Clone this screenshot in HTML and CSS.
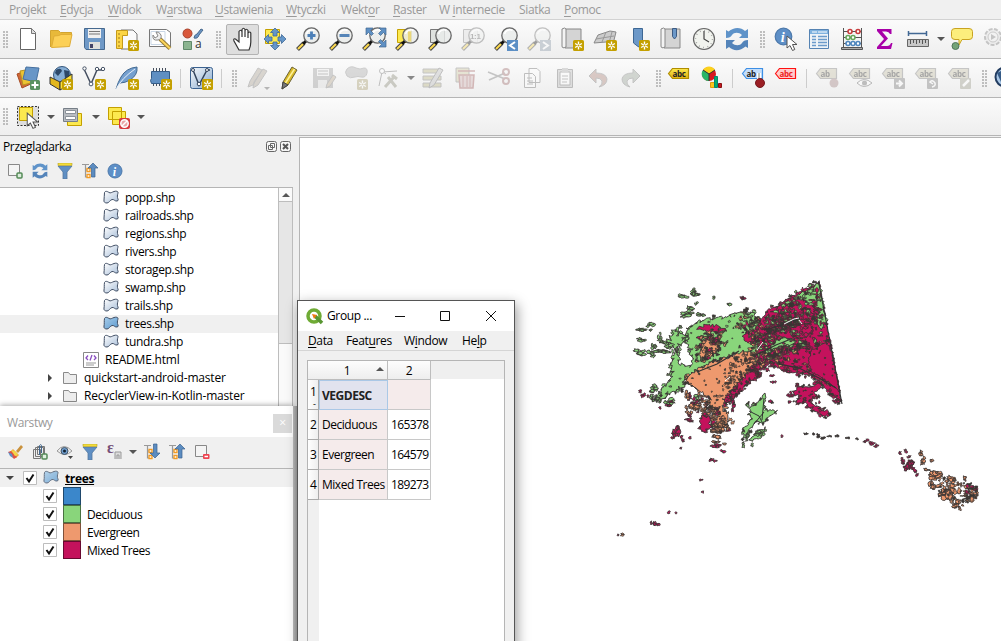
FILE: index.html
```
<!DOCTYPE html>
<html lang="pl">
<head>
<meta charset="utf-8">
<title>QGIS</title>
<link rel="stylesheet" href="styles.css">
</head>
<body>
<svg class="sprite" aria-hidden="true">
<defs>
<linearGradient id="gPoly" x1="0" y1="0" x2="1" y2="1"><stop offset="0" stop-color="#fff"/><stop offset="1" stop-color="#a9bfd9"/></linearGradient>
<linearGradient id="gBlue" x1="0" y1="0" x2="1" y2="1"><stop offset="0" stop-color="#a8cdea"/><stop offset="1" stop-color="#5e9bd0"/></linearGradient>
<linearGradient id="gPale" x1="0" y1="0" x2="1" y2="1"><stop offset="0" stop-color="#f8fafc"/><stop offset="1" stop-color="#86a9cf"/></linearGradient>
<linearGradient id="gYel" x1="0" y1="0" x2="0" y2="1"><stop offset="0" stop-color="#fce94f"/><stop offset="1" stop-color="#e0b010"/></linearGradient>
</defs>
<symbol id="star" viewBox="0 0 24 24"><rect x="13" y="13" width="11" height="11" rx="1.6" fill="#c4a000"/><path d="M18.5 14.6v7.8M15.1 16.5l6.8 4M15.1 20.5l6.8-4" stroke="#fff" stroke-width="1.4"/><circle cx="18.5" cy="18.5" r="1" fill="#c4a000"/></symbol>
<symbol id="lens" viewBox="0 0 24 24"><path d="M1.5 22.5 8 16" stroke="#444" stroke-width="4"/><path d="M2 22 8 16" stroke="#fcd94f" stroke-width="2"/><path d="M7 17l3-3" stroke="#111" stroke-width="3"/><circle cx="15.5" cy="8.500" r="7.700" fill="#e9ebea" fill-opacity=".82" stroke="#666" stroke-width="1.300"/><path d="M10.500 7a5.500 5.500 0 0 1 8-3.500" stroke="#fff" fill="none" stroke-width="1.500"/></symbol>
<symbol id="cursor" viewBox="0 0 12 17"><path d="M1 1v12l3-2.500 2.500 5 2.300-1-2.300-5H11z" fill="#fff" stroke="#555"/></symbol>
<symbol id="refresh" viewBox="0 0 24 24"><path d="M1 11V3l2.500 1.500C9-.5 16 0 20 4l3-2v9h-9l3-3C14 5 9 5 7 8c-1 2-3 3-6 3z" fill="#5f93c9"/><path d="M23 13v8l-2.500-1.500C15 24.500 8 24 4 20l-3 2v-9h9l-3 3c3 3 8 3 10 0 1-2 3-3 6-3z" fill="#5484ba"/></symbol>
<symbol id="info" viewBox="0 0 16 16"><circle cx="8" cy="8" r="7" fill="#5d8fc7" stroke="#4d79ab"/><text x="5.700" y="12.500" class="info-i">i</text></symbol>
<symbol id="pencil" viewBox="0 0 24 24"><path d="M4 23l1-7L14 1l5 3L10 19z" fill="#d8b928" stroke="#6d6436"/><path d="M7.500 17 16.500 3" stroke="#fff29a" stroke-width="1.500"/><path d="M4 23l1-7 5 3z" fill="#777" stroke="#444"/></symbol>
<symbol id="poly" viewBox="0 0 16 14"><path d="M1.500 2.500c1-2 3-1 4.500 0s3-.3 5-1 4-.2 4 1-1 3-.5 5 1.500 3-.5 3.500-3-2-5-1.500-3 3.500-5 3.500-3.500-1-3-3S1 5 1.500 2.500z" stroke="#3f4d63"/></symbol>
<symbol id="funnel" viewBox="0 0 16 16"><path d="M1 3h14L10 9v7H6V9z" fill="#5f8fc4" stroke="#53779f" stroke-width=".8"/><path d="M1 0h14v2.500H1z" fill="#f3dd38" stroke="#b7a12d" stroke-width=".6"/></symbol>
<symbol id="treeic" viewBox="0 0 16 16"><path d="M0 1.500h7M3.500 1v13H7M3.500 7H7" stroke="#999" stroke-width="1.200" fill="none"/><path d="M5 5.500h3v3H5zM5 11.500h3v3H5z" fill="#fff" stroke="#f39a20" stroke-width="1.300"/></symbol>
<symbol id="tag" viewBox="0 0 24 24"><path d="M1.500 7.500l4-5h16v10h-16z" stroke-width="1.200"/></symbol>
<symbol id="fold" viewBox="0 0 16 16"><path d="M1.500 13.500v-11h5l1.500 2h6.500v9z" fill="#ededed" stroke="#8a8a8a"/></symbol>
<symbol id="scroll" viewBox="0 0 24 24"><path d="M5 2h16v19H5z" fill="#d4d4d4" stroke="#888"/><path d="M2 2q3-2 4 0v18q-4 2-4-1z" fill="#f3f3f3" stroke="#888"/></symbol>
<symbol id="check" viewBox="0 0 14 14"><path d="M.5.5h13v13H.5z" fill="#fff" stroke="#bdbdbd"/><path d="M3.500 7l2.500 3.500L10.500 3.500" stroke="#111" stroke-width="2" fill="none"/></symbol>
</svg>

<nav class="menubar">
<span>Pro<u>j</u>ekt</span><span><u>E</u>dycja</span><span><u>W</u>idok</span><span>W<u>a</u>rstwa</span><span><u>U</u>stawienia</span><span><u>W</u>tyczki</span><span>Wekt<u>o</u>r</span><span><u>R</u>aster</span><span>W <u>i</u>nternecie</span><span>Siatka</span><span><u>P</u>omoc</span>
</nav>

<div class="toolbar">
<i class="grip"></i>
<svg class="ic"><path d="M4.500 1.500h11l4 4v17h-15z" fill="#fff" stroke="#666"/><path d="M15.500 1.500v5h4" fill="#ddd" stroke="#777"/></svg>
<svg class="ic"><path d="M1.500 20V3.500h8l2 2h11V9" fill="#e8b93a" stroke="#d3a430"/><path d="M2.500 20.500 5 9q5 0 7-1.500h11l-2.500 12z" fill="#fcd057" stroke="#e0ad36"/></svg>
<svg class="ic"><path d="M2.500 1.500h20v21H4l-1.500-2z" fill="#6f99c7" stroke="#46698f"/><path d="M6 2h13v9H6z" fill="#f0f0f0"/><path d="M7 4.500h11M7 7h11" stroke="#777"/><path d="M7 15h11v7H7z" fill="#e0e0dc"/><path d="M8 17h3v4H8z" fill="#446"/></svg>
<svg class="ic"><path d="M6 3h12l4 4v15H6z" fill="#fafafa" stroke="#777"/><path d="M1.500 3.500h11v5h-5v13h-6z" fill="#fcd545" stroke="#c59a1a"/><path d="M3 7h2M3 11h2M3 15h2M3 19h2" stroke="#9d7b22"/><use href="#star"/></svg>
<svg class="ic"><path d="M1.500 2.500h17l4 3v14h-21z" fill="#fff" stroke="#777"/><path d="M3 4.500h14v13H3z" fill="none" stroke="#c9d7e6"/><path d="M12 12l10 9.500" stroke="#957b37" stroke-width="4"/><path d="M12 12l10 9.500" stroke="#fcd65a" stroke-width="2"/><path d="M8 5l2 4-3 2-2-3q-1 6 5 5 4-1 3-5-2-4-5-3z" fill="#eee" stroke="#888"/></svg>
<svg class="ic"><circle cx="6.500" cy="6.500" r="4.500" fill="#d9583b" stroke="#a8432d"/><path d="M13 11q0-3 3-4l4-5 2 1-4 5q-1 4-5 3z" fill="#6b95c4" stroke="#47688d"/><path d="M2.500 14.500h8v8h-8z" fill="#8bb490" stroke="#60896a"/><text x="14" y="21" class="let">a</text></svg>
<i class="grip wide"></i>
<span class="pressed"><svg class="ic"><path d="M7 23 2 14q-1-3 1.500-2L7 15V4.500q1.500-2.500 3 0V10 2.500q1.500-2.500 3 0V10 3.500q1.500-2.500 3 0V11 6q1.800-2 2.800 0v9q0 4-1.800 8z" fill="#fff" stroke="#333" stroke-width="1.200"/></svg></span>
<svg class="ic"><path d="M2.500 2.500h14v14h-14z" fill="#fce94f" stroke="#c4a000"/><path d="M12 1l4.500 4.500H14V9h-4V5.500H7.500zM12 23l4.500-4.500H14V15h-4v3.500H7.500zM1 12l4.500-4.500V10H9v4H5.500v2.500zM23 12l-4.500-4.500V10H15v4h3.500v2.500z" fill="#6596c8" stroke="#3f6998" stroke-width=".8"/></svg>
<svg class="ic"><use href="#lens"/><path d="M15.500 4.500v8M11.500 8.500h8" stroke="#4d80b8" stroke-width="2.800"/></svg>
<svg class="ic"><use href="#lens"/><path d="M10.500 8.500h10" stroke="#5585b8" stroke-width="3"/></svg>
<svg class="ic"><use href="#lens"/><path d="M4 1h7L8.500 3.500l3 3-2 2-3-3L4 8zM24 1v7l-2.500-2.500-3 3-2-2 3-3L17 1zM24 20h-7l2.500-2.500-3-3 2-2 3 3L24 13z" fill="#5f90c4" stroke="#42688f" stroke-width=".7"/></svg>
<svg class="ic"><path d="M2.500 2.500h14v13h-14z" fill="#fce94f" stroke="#c4a000"/><use href="#lens"/><path d="M13 4.500h3v10h-3z" fill="#ead778"/></svg>
<svg class="ic"><path d="M2.500 2.500h14v13h-14z" fill="#dfe2df" stroke="#777"/><use href="#lens"/></svg>
<svg class="ic off"><path d="M2.500 2.500h14v13h-14z" fill="#ddd" stroke="#777"/><use href="#lens"/><text x="9" y="12" class="one">1:1</text></svg>
<svg class="ic"><use href="#lens"/><path d="M13 13h11v11H13z" fill="#5c8fc5"/><path d="M21 15l-5 3.500 5 3.500" stroke="#fff" stroke-width="2" fill="none"/></svg>
<svg class="ic off"><use href="#lens"/><path d="M13 13h11v11H13z" fill="#8897a6"/><path d="M16 15l5 3.500-5 3.500" stroke="#fff" stroke-width="2" fill="none"/></svg>
<svg class="ic"><use href="#scroll"/><use href="#star"/></svg>
<svg class="ic"><path d="M1 16 5 8 17 4l6 1-3 12-7-2z" fill="#ccc" stroke="#888"/><path d="M3 12l18-3M9 15l4-10M16 16l3-11" stroke="#999" fill="none"/><use href="#star"/></svg>
<svg class="ic"><path d="M7.500 1.500h9v20l-4.500-2-4.500-3.500z" fill="#6c98c8" stroke="#3d6794"/><use href="#star"/></svg>
<svg class="ic"><use href="#scroll"/><path d="M13.500 1.500h4v8l-2 2.500-2-2.500z" fill="#6c98c8" stroke="#3d5b82"/></svg>
<svg class="ic"><circle cx="12" cy="12" r="10.500" fill="#f1f3ee" stroke="#666" stroke-width="1.200"/><circle cx="12" cy="12" r="8.500" fill="none" stroke="#999" stroke-width="1.500" stroke-dasharray=".8 3.650"/><path d="M12 4v8l5 3" stroke="#444" stroke-width="1.200" fill="none"/></svg>
<svg class="ic"><use href="#refresh"/></svg>
<i class="grip wide"></i>
<svg class="ic"><svg width="19" height="19" viewBox="0 0 16 16"><use href="#info"/></svg><svg x="12" y="8" width="12" height="17"><use href="#cursor"/></svg></svg>
<svg class="ic"><path d="M2.500 2.500h19v19h-19z" fill="#eef3f7" stroke="#5583b3"/><path d="M3 3h18v4H3z" fill="#7fb2df"/><path d="M5 5h5m1 0h9" stroke="#fff"/><path d="M5 9.500h4m2 0h9M5 12.500h4m2 0h9M5 15.500h4m2 0h9M5 18.500h4m2 0h9" stroke="#6b9bcb" stroke-width="1.300"/></svg>
<svg class="ic"><path d="M3.500 1v20M21.500 1v20M3 4.500h19M3 10.500h19M3 16.500h19" stroke="#555"/><path d="M1.500 20.500h21v2h-21z" fill="#aaa" stroke="#555"/><g fill="#fff" stroke-width="1.600"><g stroke="#c73d3d"><circle cx="10" cy="4.500" r="2"/><circle cx="18" cy="4.500" r="2"/></g><g stroke="#67a75b"><circle cx="8" cy="10.500" r="2"/><circle cx="13" cy="10.500" r="2"/></g><g stroke="#4f86bd"><circle cx="8" cy="16.500" r="2"/><circle cx="13" cy="16.500" r="2"/><circle cx="18" cy="16.500" r="2"/></g></g></svg>
<svg class="ic"><path d="M4 2h14.500v5H17q-1-2.500-4-2.500H9l6 7-7 7.500h6q3 0 4-3h1.500L18 22H4v-2l7-8L4 4z" fill="#a800a8"/></svg>
<svg class="ic"><path d="M2 6.500h19M2.500 4v5M20.500 4v5" stroke="#426894" stroke-width="1.500"/><path d="M1.500 12.500h21v7h-21z" fill="#c7c7c7" stroke="#666"/><path d="M4.500 13v4m3-4v3m3-3v4m3-4v3m3-3v4m3-4v3" stroke="#555"/></svg>
<i class="arrow snug"></i>
<svg class="ic"><path d="M5 1.500h14q3.500 0 3.500 3v5q0 3-3.500 3h-7L9 18v-5.500H5q-3.500 0-3.500-3v-5q0-3 3.500-3z" fill="#fcee7c" stroke="#c9a321"/><circle cx="5.500" cy="19" r="3.500" fill="#73a377" stroke="#51765a"/></svg>
<svg class="ic off"><circle cx="10" cy="10" r="8" fill="#ddd" stroke="#777" stroke-width="2" stroke-dasharray="4 1.500"/><circle cx="10" cy="10" r="5" fill="#eee" stroke="#888"/><path d="M8 7v6l5-3z" fill="#777"/></svg>
</div>

<div class="toolbar">
<i class="grip"></i>
<svg class="ic"><path d="M1 8l11-4 5 13-11 5z" fill="#cf6837" stroke="#a84c25"/><path d="M4 5l11-2 3 13-11 3z" fill="#edc332" stroke="#b89422"/><path d="M10 1l13 1-3 14-13-3z" fill="#6896c7" stroke="#46709f"/><rect x="14" y="14" width="10" height="10" rx="1.500" fill="#5a9160"/><path d="M19 15.500v7M15.500 19h7" stroke="#fff" stroke-width="2"/></svg>
<svg class="ic"><circle cx="13" cy="9" r="8.500" fill="#85add4" stroke="#35577d"/><path d="M7 4q5-3 6 1l-4 5-3-3zM15 4l5 1 1 6-5 1z" fill="#2d4868"/><path d="M1 11l10 5v8L1 18z" fill="#e3b71c" stroke="#333"/><path d="M11 16l12-8v9l-12 7z" fill="#fcdf37" stroke="#333"/><use href="#star"/></svg>
<svg class="ic"><path d="M2 3l7 15 6-14h6" stroke="#444e60" stroke-width="1.500" fill="none"/><g fill="#fff" stroke="#465366"><circle cx="2.500" cy="2.500" r="1.700"/><circle cx="9" cy="18" r="1.900"/><circle cx="15" cy="3" r="1.700"/><circle cx="21" cy="3" r="1.700"/></g><use href="#star"/></svg>
<svg class="ic"><path d="M1 23q2-7 5-12Q11 2 22 1q1 8-7 13-5 3-10 3" fill="#75a0cf" stroke="#426991"/><path d="M1 23Q7 12 20 3" stroke="#e7f0fa" fill="none"/><use href="#star"/></svg>
<svg class="ic"><path d="M5.500 2v18m3-18v18m3-18v18m3-18v18m3-18v18" stroke="#454f5d"/><path d="M3.500 5.500h18v12h-18l-1-3 1-2z" fill="#5f8fc2" stroke="#355c88"/><use href="#star"/></svg>
<i class="sep"></i>
<svg class="ic"><rect x="1.500" y="1.500" width="22" height="21" rx="2" fill="url(#gPale)" stroke="#3b6290"/><path d="M4 4l6 15L18 4h3" stroke="#33445c" stroke-width="1.500" fill="none"/><g fill="#fff" stroke="#33445c"><circle cx="4" cy="4" r="1.500"/><circle cx="10" cy="18" r="1.800"/><circle cx="18" cy="4" r="1.500"/></g><use href="#star"/></svg>
<i class="sep"></i><i class="grip wide"></i>
<div class="tight">
<svg class="ic off"><path d="M2 21l2-6L12 2l4 2L7 19zM7 22l1-6 9-13 4 2-9 14z" fill="#aaa091" stroke="#777"/><path d="M18 21h6l-3 3z" fill="#555"/></svg>
<svg class="ic"><use href="#pencil" x="-1"/></svg>
<svg class="ic off"><path d="M2 2h20v20H2z" fill="#999"/><path d="M6 3h12v7H6z" fill="#eee"/><path d="M7 5h10M7 8h10" stroke="#777"/><path d="M7 14h9v8H7z" fill="#ddd"/><path d="M15 22l1-4 6-9 3 2-6 9z" fill="#b9a88f" stroke="#777"/></svg>
<svg class="ic off"><path d="M3 3q4-4 9-1 4 2 8 0 4 0 3 5-1 5-6 4-3-1-6 0-5 2-8-1-3-4 0-7z" fill="#aaa" stroke="#888"/><use href="#star" class="gray"/></svg>
<svg class="ic off"><path d="M3 20 6 6l15-1M6 5l4 3" fill="none" stroke="#666"/><circle cx="6" cy="5" r="2.500" fill="#fff" stroke="#666"/><path d="M9 21l9-10M12 11l8 10M16 9l5 4" stroke="#887" stroke-width="3"/></svg>
</div>
<i class="arrow dim"></i>
<svg class="ic off"><path d="M2 3h18v4H2zm0 7h18v4H2zm0 7h18v4H2z" fill="#b8b37e" stroke="#777"/><path d="M8 22l1-5L18 2l4 2-9 15z" fill="#bbb" stroke="#666"/></svg>
<svg class="ic off"><path d="M2 2h13v14H2z" fill="#ccc69c" stroke="#777"/><path d="M4 5h17M5 9h15l-1 13H6z" fill="#ceb1b1" stroke="#9d5555" stroke-width="1.500"/><path d="M9 10v11m4-11v11m3-11v11" stroke="#9d5555"/></svg>
<svg class="ic off"><path d="M1 6l17 7M2 14l16-7" stroke="#777" stroke-width="1.800"/><circle cx="19" cy="6" r="3" fill="none" stroke="#9b6868" stroke-width="2"/><circle cx="19" cy="15" r="3" fill="none" stroke="#9b6868" stroke-width="2"/></svg>
<svg class="ic off"><path d="M9 2.500h8l3 3v11H9zM4.500 7.500h8l3 3v11h-11z" fill="#fff" stroke="#666"/><path d="M7 12h5m-5 3h6m-6 3h6" stroke="#666"/></svg>
<svg class="ic off"><path d="M4.500 3.500h15v18h-15z" fill="#bbb" stroke="#666"/><path d="M7 6h10v13H7z" fill="#fff" stroke="#666"/><path d="M9 2h6v4H9z" fill="#aaa"/><path d="M9 10h6m-6 3h6m-6 3h5" stroke="#777"/></svg>
<svg class="ic off"><path d="M3 10l7-7v4q10 0 11 6 0 6-8 8 4-3 3-6-1-3-6-3v5z" fill="#ab8276" stroke="#777"/></svg>
<svg class="ic off"><path d="M21 10l-7-7v4Q4 7 3 13q0 6 8 8-4-3-3-6 1-3 6-3v5z" fill="#97a295" stroke="#777"/></svg>
<i class="grip mid"></i>
<svg class="ic"><use href="#tag" fill="url(#gYel)" stroke="#b08d00"/><text x="5.500" y="10.500" class="abc">abc</text></svg>
<svg class="ic"><circle cx="9" cy="8" r="7" fill="#d71920"/><path d="M9 8 3 4a7 7 0 0 1 12 0z" fill="#fcd21c"/><path d="M9 8v7A7 7 0 0 1 3 4z" fill="#2ab567"/><path d="M3 4l6 4 6-4M9 8v7" stroke="#333" fill="none"/><path d="M10.500 16.500h4v5h-4z" fill="#fcc61c" stroke="#e19b10"/><path d="M14.500 10.500h3v11h-3z" fill="#0aad69" stroke="#087"/><path d="M18.500 17.500h3v4h-3z" fill="#c21820" stroke="#811"/></svg>
<i class="sep"></i>
<svg class="ic"><use href="#tag" fill="#c5defa" stroke="#3d8fe5"/><text x="5.500" y="10.500" class="abc">ab</text><path d="M18 7v9" stroke="#fff" stroke-width="4"/><path d="M18 7v9" stroke="#887" stroke-width="1"/><circle cx="19" cy="17" r="4.500" fill="#9b1f25" stroke="#761a20"/></svg>
<svg class="ic"><use href="#tag" fill="#fcc" stroke="#f11"/><text x="5.500" y="10.500" class="abc crimson">abc</text></svg>
<i class="sep"></i>
<svg class="ic off"><use href="#tag" fill="#c4bfa5" stroke="#777"/><text x="5.500" y="10.500" class="abc">ab</text><circle cx="19" cy="17" r="4.500" fill="#a08080"/></svg>
<svg class="ic off"><use href="#tag" fill="#c4bfa5" stroke="#777"/><text x="5.500" y="10.500" class="abc">abc</text><path d="M9 17q7-7 15 0-8 7-15 0z" fill="#fff" stroke="#555"/><circle cx="16.500" cy="17" r="2.500" fill="#666"/></svg>
<svg class="ic off"><use href="#tag" fill="#c4bfa5" stroke="#777"/><text x="5.500" y="10.500" class="abc">abc</text><rect x="13" y="12" width="11" height="11" rx="1" fill="#777"/><path d="M15 17.500h6m-3-3 3 3-3 3" stroke="#fff" stroke-width="2" fill="none"/></svg>
<svg class="ic off"><use href="#tag" fill="#c4bfa5" stroke="#777"/><text x="5.500" y="10.500" class="abc">abc</text><rect x="13" y="12" width="11" height="11" rx="1" fill="#777"/><path d="M18 21q4-1 3-4-3-4-5-1l3 2" stroke="#fff" stroke-width="1.500" fill="none"/></svg>
<svg class="ic off"><use href="#tag" fill="#c4bfa5" stroke="#777"/><text x="5.500" y="10.500" class="abc">abc</text><rect x="13" y="12" width="11" height="11" rx="1" fill="#998"/><path d="M16 20l6-6" stroke="#fff" stroke-width="2.500"/></svg>
<i class="grip wide"></i>
<svg class="ic"><circle cx="9" cy="11" r="9.500" fill="#a8c6e5" stroke="#223c60" stroke-width="2"/><path d="M1 7l6-3 2 6-4 6z" fill="#355a86"/></svg>
</div>

<div class="toolbar last">
<i class="grip"></i>
<svg class="ic"><path d="M1.500 1.500h21v19h-21z" fill="#dedede" stroke="#333" stroke-dasharray="2 1.500"/><path d="M3.500 2.500h13v13h-13z" fill="#fce94f" stroke="#c4a000"/><svg x="9" y="7" width="15" height="18" viewBox="0 0 12 17"><use href="#cursor"/></svg></svg><i class="arrow"></i>
<svg class="ic"><path d="M6.500 8.500h14v12h-14z" fill="#fce94f" stroke="#c4a000"/><path d="M2.500 3.500h14v13h-14z" fill="#b9bdc2" stroke="#777f88"/><path d="M4.500 5.500h10v3h-10zM4.500 11.500h10v3h-10z" fill="#fff" stroke="#8b929a"/></svg><i class="arrow"></i>
<svg class="ic"><path d="M2.500 2.500h13v12h-13zM6.500 6.500h13v13h-13z" fill="#fce94f" stroke="#c4a000"/><rect x="13" y="13" width="11" height="11" rx="2" fill="#d63b40"/><circle cx="18.500" cy="18.500" r="3.700" fill="#e9a6a6" stroke="#fff" stroke-width="1.500"/><path d="M16 21l5-5" stroke="#fff" stroke-width="1.500"/></svg><i class="arrow"></i>
</div>

<main class="work">
<aside class="browser">
<header class="dock-title"><span>Przeglądarka</span>
<svg width="26" height="12"><g fill="#f5f5f5" stroke="#666"><rect x=".5" y=".5" width="10" height="10" rx="2"/><rect x="14.500" y=".5" width="10" height="10" rx="2"/><path d="M4.500 2.500h4v4h-4zM2.500 4.500h4v4h-4z"/></g><path d="M17 3l5 5m0-5-5 5" stroke="#555" stroke-width="2"/></svg></header>
<div class="minibar">
<svg viewBox="0 0 16 16"><path d="M1.500 1.500h11v11h-11z" fill="#f4f4f4" stroke="#888"/><rect x="10" y="10" width="5" height="5" rx="1" fill="#dcecdc" stroke="#548a57" stroke-width="1.500"/></svg>
<svg viewBox="0 0 24 24"><use href="#refresh"/></svg>
<svg viewBox="0 0 16 16"><use href="#funnel"/></svg>
<svg viewBox="0 0 16 16"><use href="#treeic"/><path d="M11 0l5 5h-3v9H9.500V5H6z" fill="#5c8cc0" stroke="#3a628f" stroke-width=".7"/></svg>
<svg viewBox="0 0 16 16"><use href="#info"/></svg>
</div>
<div class="tree">
<ul class="files">
<li><svg class="pi"><use href="#poly" fill="url(#gPoly)"/></svg>popp.shp</li>
<li><svg class="pi"><use href="#poly" fill="url(#gPoly)"/></svg>railroads.shp</li>
<li><svg class="pi"><use href="#poly" fill="url(#gPoly)"/></svg>regions.shp</li>
<li><svg class="pi"><use href="#poly" fill="url(#gPoly)"/></svg>rivers.shp</li>
<li><svg class="pi"><use href="#poly" fill="url(#gPoly)"/></svg>storagep.shp</li>
<li><svg class="pi"><use href="#poly" fill="url(#gPoly)"/></svg>swamp.shp</li>
<li><svg class="pi"><use href="#poly" fill="url(#gPoly)"/></svg>trails.shp</li>
<li class="hot"><svg class="pi"><use href="#poly" fill="url(#gBlue)"/></svg>trees.shp</li>
<li><svg class="pi"><use href="#poly" fill="url(#gPoly)"/></svg>tundra.shp</li>
<li class="l2"><svg class="doc"><path d="M.5.5h15v15H.5z" fill="#fff" stroke="#888"/><path d="M5 3.500 3 6l2 2m6-4.500L13 6l-2 2M9 3 7 8.500" stroke="#8a4fc0" stroke-width="1.300" fill="none"/><path d="M3 11h10M3 13h8" stroke="#999"/></svg>README.html</li>
<li class="l1"><i class="tri"></i><svg class="fo" viewBox="0 0 16 16"><use href="#fold"/></svg>quickstart-android-master</li>
<li class="l1"><i class="tri"></i><svg class="fo" viewBox="0 0 16 16"><use href="#fold"/></svg>RecyclerView-in-Kotlin-master</li>
</ul>
<div class="scroll"><div class="up"><i></i></div><div class="thumb"></div></div>
</div>
</aside>
<section class="canvas"><svg id="map" width="701" height="504" viewBox="300 138 701 504"></svg></section>
</main>

<section class="layers">
<header><span>Warstwy</span><b>×</b></header>
<div class="minibar">
<svg viewBox="0 0 16 16"><path d="M9 7l5-6 2 2-5 6z" fill="#c9913c"/><path d="M6 5l6 6-3 3-6-6z" fill="#eea53b"/><path d="M1 8l3-1 6 6-3 2z" fill="#df5146"/><path d="M1 8l2 4 3 2-1-4z" fill="#5d90c8"/><path d="M4 6l4 1 3 4-3 1z" fill="#f3d448"/></svg>
<svg viewBox="0 0 16 16"><path d="M1.500 5.500h7v9h-7zM3.500 3.500h8v9h-8zM5.500 2.500h7v8h-7z" fill="#eee" stroke="#777"/><path d="M7.500 11V1.500q1.500-2 2 0V9" stroke="#43688f" fill="none"/><rect x="10" y="10" width="5" height="5" rx="1" fill="#e0efe0" stroke="#548a57" stroke-width="1.500"/></svg>
<svg viewBox="0 0 16 16"><path d="M0 7q7-9 15 0-7 7-15 0z" fill="#eee" stroke="#999"/><circle cx="7.500" cy="7" r="3.500" fill="#6f9dce" stroke="#456"/><circle cx="7.500" cy="7" r="1.500" fill="#123"/><path d="M11 12h5l-2.500 3z" fill="#444"/></svg>
<svg viewBox="0 0 16 16"><use href="#funnel"/></svg>
<svg viewBox="0 0 16 16"><text x="0" y="9" class="eps">ε</text><path d="M8 15V8h6v7M10 15v-4h2v4" fill="#ddd" stroke="#999"/></svg>
<i class="arrow"></i>
<svg viewBox="0 0 16 16"><use href="#treeic" x="1"/><path d="M12 14l5-5h-3V0h-3.500v9H7z" fill="#5c8cc0" stroke="#3a628f" stroke-width=".7"/></svg>
<svg viewBox="0 0 16 16"><use href="#treeic" x="1"/><path d="M12 0l5 5h-3v9h-3.500V5H7z" fill="#5c8cc0" stroke="#3a628f" stroke-width=".7"/></svg>
<svg viewBox="0 0 16 16"><path d="M2.500 1.500h11v11h-11z" fill="#f4f4f4" stroke="#888"/><rect x="10" y="10" width="6.500" height="5" rx="1" fill="#ee4350"/><path d="M11.500 12.500H15" stroke="#fff" stroke-width="1.500"/></svg>
</div>
<ul class="legend">
<li class="root"><i class="tri down"></i><svg class="cb"><use href="#check"/></svg><svg class="pi"><use href="#poly" fill="url(#gBlue)" opacity=".8"/></svg><b>trees</b></li>
<li><svg class="cb"><use href="#check"/></svg><i class="sw blue"></i></li>
<li><svg class="cb"><use href="#check"/></svg><i class="sw green"></i><span>Deciduous</span></li>
<li><svg class="cb"><use href="#check"/></svg><i class="sw orange"></i><span>Evergreen</span></li>
<li><svg class="cb"><use href="#check"/></svg><i class="sw red"></i><span>Mixed Trees</span></li>
</ul>
</section>
<i class="splitter"></i>

<section class="dialog">
<header>
<svg width="17" height="17" viewBox="0 0 17 17"><circle cx="8" cy="8" r="6" fill="#fff" stroke="#6fab35" stroke-width="3.500"/><path d="M9 8l7 7" stroke="#589632" stroke-width="3.500"/><path d="M6 6l5 1-3 4z" fill="#ee7913"/></svg>
<span>Group ...</span>
<svg width="102" height="12" class="winbtns"><path d="M0 6.500h10M45.500 1.500h9v9h-9zM91 1l10 10m0-10L91 11" fill="none" stroke="#111"/></svg>
</header>
<nav><span><u>D</u>ata</span><span>Feat<u>u</u>res</span><span>W<u>i</u>ndow</span><span>He<u>l</u>p</span></nav>
<div class="frame">
<div class="grid">
<div class="h"></div><div class="h c">1<i></i></div><div class="h c">2</div>
<div class="n first"><span>1</span><small>-</small></div><div class="k sel">VEGDESC</div><div class="k"></div>
<div class="n">2</div><div class="k">Deciduous</div><div class="v">165378</div>
<div class="n">3</div><div class="k">Evergreen</div><div class="v">164579</div>
<div class="n">4</div><div class="k">Mixed Trees</div><div class="v">189273</div>
</div>
<div class="rest"></div>
</div>
</section>
<script src="map.js"></script>
</body>
</html>
```
FILE: styles.css
```
* { box-sizing: border-box; }
body { margin: 0; width: 1001px; height: 641px; overflow: hidden; background: #f0f0f0; color: #000; font: 12px/18px "Open Sans", "Noto Sans", sans-serif; letter-spacing: -.35px; position: relative; }
.sprite { position: absolute; width: 0; height: 0; }
svg { flex: none; overflow: visible; }
ul { list-style: none; margin: 0; padding: 0; }
i { display: block; flex: none; font-style: normal; }
u { text-underline-offset: 2px; text-decoration-thickness: 1px; }

.menubar { height: 20px; border-bottom: 1px solid #d2d2d2; background: #f0f0f0; color: #999; display: grid; grid-template-columns: 51px 48px 48px 59px 71px 55px 52px 46px 80px 45px 60px; padding-left: 9px; line-height: 20px; white-space: nowrap; }
.toolbar { height: 39px; border-bottom: 1px solid #b5b5b5; background: linear-gradient(#fbfbfb, #eee); display: flex; align-items: center; overflow: hidden; }
.toolbar.last { height: 38px; }
.ic { width: 24px; height: 24px; margin: 0 5px 0 4px; }
.tight { display: flex; }
.tight .ic { margin-right: 4.5px; }
.off { opacity: .38; }
.gray { filter: grayscale(.7); }
.grip { width: 12px; height: 17px; background: radial-gradient(circle at 1px 1px, #aaa .6px, transparent 1px) 0 0 / 3px 3px content-box content-box; padding: 0 4px 0 3px; }
.grip.wide { width: 16px; padding: 0 5px 0 6px; }
.grip.mid { width: 15px; padding: 0 2px 0 8px; }
.sep { width: 8px; height: 19px; border-left: 1px solid #ccc; border-right: 3px solid transparent; transform: translateX(3px); }
.arrow { width: 12px; display: flex; justify-content: center; }
.arrow.snug { width: 11px; }
.arrow::after { content: ""; border: 4px solid transparent; border-top-color: #555; border-bottom: 0; }
.arrow.dim::after { border-top-color: #888; }
.pressed { width: 33px; height: 31px; display: flex; align-items: center; background: #dedede; border: 1px solid #b3b3b3; border-radius: 2px; }
.pressed .ic { margin-left: 5px; }
.let { font: 12px "Open Sans", sans-serif; fill: #333; }
.one { font: bold 8px "Liberation Sans", sans-serif; fill: #555; }
.abc { font: bold 8px "Open Sans", sans-serif; letter-spacing: -.3px; fill: #222; }
.crimson { fill: #e22; }
.info-i { font: italic bold 12px "Liberation Serif", serif; fill: #fff; }
.eps { font: bold 16px "Liberation Serif", serif; fill: #765078; }

.work { display: grid; grid-template-columns: 299px 1fr; height: 505px; }
.canvas { background: #fff; border-left: 1px solid #b5b5b5; border-top: 1px solid #b5b5b5; margin-top: 1px; overflow: hidden; }
.canvas svg { display: block; }
.browser { width: 293px; display: flex; flex-direction: column; }
.dock-title { height: 21px; padding: 0 1px 0 3px; display: flex; justify-content: space-between; align-items: center; }
.minibar { display: flex; align-items: center; gap: 9px; padding: 0 0 2px 7px; height: 30px; }
.minibar svg { width: 16px; height: 16px; }
.tree { border-top: 1px solid #b5b5b5; background: #fff; flex: 1; display: flex; overflow: hidden; }
.files { flex: 1; padding-top: 1px; }
.files li { height: 18px; padding-left: 103px; display: flex; align-items: center; gap: 6px; white-space: nowrap; }
.files .hot, .root { background: #f0f0f0; }
.pi { width: 16px; height: 14px; margin-top: -3px; }
.files .l2 { padding-left: 83px; letter-spacing: -.2px; }
.doc { width: 16px; height: 16px; }
.files .l1 { padding-left: 48px; letter-spacing: -.2px; }
.fo { width: 16px; height: 16px; margin: 0 -1px 0 4px; }
.tri { width: 4px; height: 8px; background: #444; clip-path: polygon(0 0, 100% 50%, 0 100%); }
.l1 .fo { margin: 0 0 0 4px; }
.tri.down { width: 8px; height: 4px; clip-path: polygon(0 0, 100% 0, 50% 100%); }
.scroll { width: 15px; border: solid #bdbdbd; border-width: 0 1px; background: #fafafa; }
.up { height: 14px; display: flex; justify-content: center; align-items: center; background: #fafafa; border-bottom: 1px solid #bdbdbd; }
.up i { border: 4px solid transparent; border-bottom-color: #555; border-top: 0; }
.thumb { height: 142px; background: #e6e6e6; border-bottom: 1px solid #bdbdbd; }

.layers { position: absolute; left: 0; top: 406px; width: 293px; height: 235px; background: #fff; box-shadow: 0 -1px 5px #0005; }
.layers header { height: 31px; display: flex; align-items: center; justify-content: space-between; padding: 4px 1px 1px 7px; color: #999; }
.layers header b { width: 19px; height: 19px; background: #dadada; color: #fff; text-align: center; font-weight: 400; line-height: 18px; }
.layers .minibar { height: 32px; background: #f0f0f0; border-bottom: 1px solid #b5b5b5; padding-bottom: 1px; }
.layers .arrow { margin: 0 -5px 0 -5px; }
.legend li { height: 18px; padding-left: 43px; display: flex; align-items: center; }
.legend span { padding-top: 2px; letter-spacing: -.45px; }
.legend .root { padding-left: 6px; }
.cb { width: 14px; height: 14px; }
.root .cb { margin: 0 6px 0 9px; }
.root b { margin-left: 6px; padding-top: 2px; text-decoration: underline; text-underline-offset: 1px; }
.sw { width: 18px; height: 18px; margin: 0 6px; border: 1px solid #0007; }
.blue { background: #3b87cb; }
.green { background: #89d57b; }
.orange { background: #ee996e; }
.red { background: #c4125c; }
.splitter { position: absolute; left: 293px; top: 406px; width: 5px; height: 235px; background: linear-gradient(90deg, #bcbcbc, #9c9c9c); }

.dialog { position: absolute; left: 297px; top: 300px; width: 218px; height: 360px; background: #f0f0f0; border: 1px solid #555; box-shadow: 2px 4px 12px #0006; display: flex; flex-direction: column; }
.dialog header { height: 30px; background: #fff; display: flex; align-items: center; padding-left: 8px; }
.dialog header span { width: 72px; padding-left: 4px; white-space: nowrap; }
.dialog nav { height: 20px; border-bottom: 1px solid #d5d5d5; display: grid; grid-template-columns: 38px 58px 58px 40px; padding-left: 10px; line-height: 20px; }
.frame { margin: 9px 9px 0; border: 1px solid #b5b5b5; flex: 1; background: #fff; display: flex; flex-direction: column; }
.grid { display: grid; grid-template-columns: 11px 69px 43px; grid-template-rows: 19px repeat(4, 30px); background: linear-gradient(#efefef 18px, #fff 18px); letter-spacing: -.48px; }
.grid > div { border-right: 1px solid #c8c8c8; border-bottom: 1px solid #c8c8c8; display: flex; align-items: center; padding: 1px 0 0 3px; white-space: nowrap; }
.grid .h { background: linear-gradient(#fdfdfd, #eee); border-color: #bdbdbd; }
.grid .h:first-child { border-right: 0; }
.grid .c { justify-content: center; padding: 1px 0 0; }
.h i { border: 4px solid transparent; border-bottom-color: #555; border-top: 0; margin: -3px -22px 0 26px; }
.grid .n { background: linear-gradient(90deg, #fff, #eee); border-color: #aaa; padding-left: 2px; }
.grid .first { flex-direction: column; align-items: flex-start; padding-top: 3px; }
.first span { line-height: 17px; }
.first small { line-height: 7px; height: 7px; font-size: 9px; padding-left: 3px; }
.grid .v { letter-spacing: -.6px; }
.grid .k { background: #f5ebeb; }
.grid .sel { background: #e1e3ee; font-weight: 700; border: 1px solid #aac8e6; padding-left: 2px; color: #222; }
.rest { flex: 1; width: 11px; background: #f0f0f0; }
```
FILE: map.js
```
(function () {
  var map = document.getElementById('map');
  var G = '#89d57b', O = '#ee996e', R = '#c4125c', K = '#3a3634';
  var seed = 17, out = '';
  function rnd() { seed = (seed * 16807) % 2147483647; return seed / 2147483647; }
  function jag(p, amp) {
    var d = [];
    for (var i = 0; i < p.length; i += 2) {
      var x = p[i], y = p[i + 1], j = (i + 2) % p.length, dx = p[j] - x, dy = p[j + 1] - y;
      var n = Math.max(1, Math.round(Math.hypot(dx, dy) / 1.6));
      for (var k = 0; k < n; k++) d.push((x + dx * k / n + (rnd() - .5) * amp).toFixed(1) + ' ' + (y + dy * k / n + (rnd() - .5) * amp).toFixed(1));
    }
    return 'M' + d.join('L') + 'Z';
  }
  function draw(d, fill, w) { out += '<path d="' + d + '" fill="' + fill + '" stroke="' + K + '" stroke-width="' + (w || .9) + '"/>'; }
  function area(fill, p, amp) { draw(jag(p, amp === undefined ? 4.5 : amp), fill); }
  function blob(x, y, w, h, fill, w0) {
    var d = [], a0 = rnd() * 6;
    for (var i = 0; i < 11; i++) {
      var a = a0 + i * .571, r = .3 + rnd() * .9;
      d.push((x + Math.cos(a) * w * r / 2).toFixed(1) + ' ' + (y + Math.sin(a) * h * r / 2).toFixed(1));
    }
    draw('M' + d.join('L') + 'Z', fill, w0 || .8);
  }
  function inside(p, x, y) {
    var c = false;
    for (var i = 0, j = p.length - 2; i < p.length; j = i, i += 2)
      if ((p[i + 1] > y) !== (p[j + 1] > y) && x < (p[j] - p[i]) * (y - p[i + 1]) / (p[j + 1] - p[i + 1]) + p[i]) c = !c;
    return c;
  }
  function scatter(p, n, size, cols, w0) {
    var xs = p.filter(function (v, i) { return i % 2 === 0; }), ys = p.filter(function (v, i) { return i % 2; });
    var x0 = Math.min.apply(0, xs), x1 = Math.max.apply(0, xs), y0 = Math.min.apply(0, ys), y1 = Math.max.apply(0, ys);
    while (n > 0) {
      var x = x0 + rnd() * (x1 - x0), y = y0 + rnd() * (y1 - y0);
      if (!inside(p, x, y)) continue;
      n--;
      blob(x, y, 1 + rnd() * size, 1 + rnd() * size * .8, cols[Math.floor(rnd() * cols.length)], w0);
    }
  }
  function fringe(p, n, spread, size, cols) {
    while (n-- > 0) {
      var i = Math.floor(rnd() * p.length / 2) * 2, j = (i + 2) % p.length, t = rnd();
      blob(p[i] + (p[j] - p[i]) * t + (rnd() - .5) * spread, p[i + 1] + (p[j + 1] - p[i + 1]) * t + (rnd() - .5) * spread,
        1.500 + rnd() * size, 1.500 + rnd() * size, cols[Math.floor(rnd() * cols.length)]);
    }
  }
  function isles(fill, list) {
    list.forEach(function (b) {
      var n = Math.max(1, Math.round(b[2] * b[3] / 9));
      for (var k = 0; k < n; k++) {
        var s = n > 1 ? .62 : 1;
        blob(b[0] + (n > 1 ? (rnd() - .5) * b[2] * .75 : 0), b[1] + (n > 1 ? (rnd() - .5) * b[3] * .75 : 0), Math.max(3, b[2] * s), Math.max(2.500, b[3] * s), fill, .9);
      }
    });
  }

  var north = [687,329,700,321,722,318,744,312,756,315,764,325,775,340,775,355,740,352,712,364,700,372,686,378,683,386,672,391,664,399,656,402,653,399,662,390,672,378,673,356,677,352,681,365,690,366,692,356,686,340];
  var arm = [674,328,677,334,688,337,680,343,676,352,673,346,668,341,671,336];
  fringe(north, 90, 7, 4, [G, G, K]);
  fringe(arm, 22, 6, 4, [G]);
  area(G, north);
  area(G, arm);
  var east = [756,328,768,310,778,306,790,297,806,289,814,286,819,282,842,403,832,394,818,380,804,374,790,372,778,368,769,364,762,368,750,378,738,394,726,404,722,397,736,382,748,362,758,350];
  var eastEdge = [756,328,768,310,778,306,790,297,806,289,817,283];
  fringe(eastEdge, 24, 5, 4, [G, R, K]);
  area(R, east, 2.5);
  area(G, [784,304,794,298,804,291,814,287,819,282,827,322,820,330,815,322,808,308,796,311,782,314], 3);
  area(R, [790,302,800,298,808,302,816,300,818,316,808,322,798,316,786,318,780,311], 4);
  area(G, [771,346,782,337,795,339,790,344,778,348,765,352], 2);
  var tongue = [722,398,730,391,742,376,752,368,762,374,748,384,738,393,726,404];
  area(R, tongue);
  fringe(tongue, 24, 4, 3, [R, K]);
  var core = [685,378,697,371,712,363,732,355,750,350,758,356,751,370,740,380,733,390,722,399,724,408,730,422,722,432,714,430,716,415,708,404,710,397,700,392,691,385];
  fringe(core, 40, 5, 4, [O, O, K]);
  area(O, core);
  area(O, [700,347,709,337,717,339,718,350,710,357,699,359]);
  area(R, [698,328,706,325,718,326,727,331,718,333,706,331], 3);
  area(R, [743,335,750,331,758,336,754,343,745,341], 3);

  scatter([697,335,715,330,728,340,720,354,705,362,694,362], 80, 4.5, [O, K, R, K, O], .9);
  scatter([708,334,722,332,718,345,708,344], 35, 4, [K, K, O, R]);
  scatter([742,312,757,315,764,330,757,348,746,340,736,325], 85, 5, [O, R, K, G, O]);
  scatter([752,335,782,318,810,320,828,340,832,350,800,350,776,362,750,365], 190, 5, [R, K, O, G, R, R]);
  scatter([762,318,790,299,817,285,825,325,800,325,770,335], 190, 5.5, [R, G, K, G, R]);
  scatter([757,345,772,336,800,338,810,346,790,352,770,364,752,368], 100, 5, [O, G, K, R, G]);
  area(G, [775,342,784,338,797,341,790,345,778,347,768,350], 2);
  scatter([755,350,780,355,810,365,836,380,838,388,800,373,775,366,750,372], 80, 4.5, [O, R, K, O]);
  scatter([690,392,710,398,720,412,730,430,717,437,700,418], 130, 5, [O, O, K, R, O]);
  scatter([733,352,757,352,752,376,734,388,717,400,728,378], 65, 4, [O, K, O]);
  scatter(north, 55, 2, [G, K, G]);
  scatter(core, 50, 1.6, [O, K]);
  scatter(east, 110, 2, [R, K, R]);
  fringe([726,404,738,394,750,381,762,370,778,368,790,371,804,376,820,384,834,396,841,403], 60, 4, 3.500, [R, R, K]);
  area(R, [812,350,826,342,831,350,840,392,826,380,812,372,808,360], 2);
  scatter([812,350,826,342,831,350,838,384,820,374], 12, 1.200, [K]);
  scatter([762,329,778,325,792,318,800,320,799,325,782,330,764,335], 60, 3, [K, K, R], .9);
  out += '<path d="M764 330l12-3 16-6 8-3M756 355l20-10 15-6M779 364l20 4 20 10 17 10M697 372l20-8 22-13" fill="none" stroke="#333" stroke-width="1.300"/>';
  out += '<path d="M784 324l10-5 5-1M799 320l3 4M757 350l6-8M725 381l5-4" stroke="#fff" stroke-width="1" fill="none"/>';
  var hook = [797,387,812,386,820,383,823,386,815,391,818,397,809,401,820,409,829,412,829,416,821,415,812,410,802,402,795,403,799,396,794,394];
  fringe(hook, 45, 4, 3, [R, R, K]);
  area(R, hook, 3);
  scatter([797,390,812,388,814,398,822,412,810,408,800,401], 20, 2, [K, R]);
  var bay = [702,416,709,417,710,426,705,433,699,427];
  fringe(bay, 12, 3, 3, [R]);
  area(R, bay, 3);
  var isle = [746,403,750,408,757,404,765,394,764,410,778,411,767,418,762,424,756,420,750,430,743,440,744,428,752,420,750,412];
  fringe(isle, 30, 3, 3, [G, K]);
  area(G, isle, 2.500);
  area(G, [758,431,766,428,764,436,757,439,750,441,755,434], 3);
  out += '<path d="M749 411l10 5 4 8M764 398l-2 22M754 424l10-12" fill="none" stroke="#333"/>';
  isles(G, [[683,296,11,3],[692,292,8,7],[698,296,8,4],[694,291,3,7],[697,303,5,3],[714,297,4,4],[729,305,7,4],[689,309,9,6],[687,315,12,6],[701,314,8,4],
    [651,325,8,5],[643,330,12,4],[649,329,5,4],[660,336,3,9],[643,340,10,4],[640,352,11,6],[651,354,8,6],[654,347,5,7],[663,341,10,4],[662,352,16,4],[669,346,9,6],[681,327,5,4],[686,340,7,6],[653,391,7,7],[657,398,9,5],[669,402,9,7],[650,397,6,5],[758,433,9,5],[748,436,4,8],[743,444,3,7],[752,445,3,4],[764,431,6,3],[655,387,8,5],[697,398,6,5]]);
  isles(R, [[641,392,5,4],[643,396,4,6],[648,396,3,3],[671,401,4,5],[660,408,3,2],[668,406,8,4],[742,298,3,6],[744,298,5,3],[676,431,7,10],[673,436,5,6],[677,425,3,7],[689,420,8,4],[690,416,5,5],[682,439,4,6],[690,438,3,3],[681,448,3,2],[715,446,12,3],[722,451,6,3],[713,460,8,3],[701,480,6,2],[703,492,2,2],[669,512,4,3],[676,513,3,2],[654,524,6,5],[657,525,6,3],[651,523,3,4],[618,535,3,2],[772,376,5,3],[774,383,7,3],[734,402,4,10],[733,410,3,5],[782,436,2,4],[790,394,7,5],[789,402,6,3],[797,385,6,4],[837,401,7,5],[695,402,7,5],[689,397,4,8],[770,401,4,3]]);
  isles(O, [[687,395,4,9],[686,408,4,5],[689,412,7,4],[695,407,11,7],[716,436,8,6],[717,441,8,4],[724,444,5,2],[727,428,4,7],[624,534,6,3]]);
  isles(K, [[806,434,5,2],[814,434,3,2],[819,436,6,3],[823,438,5,2],[830,436,6,2],[837,436,4,2],[848,438,5,2],[857,439,2,2]]);
  isles(R, [[866,441,6,4],[871,443,7,4],[876,446,6,3],[900,453,4,4],[905,451,4,4],[903,459,4,4],[909,457,5,4],[909,465,9,9],[914,470,6,5],[904,461,5,6],[916,475,4,4],[911,461,6,7]]);
  var tail = [926,468,938,468,942,478,954,475,966,484,978,486,979,500,968,502,962,508,954,508,946,496,938,492,930,482];
  scatter(tail, 85, 7, [O, O, O, K]);
  scatter([964,485,979,487,979,500,966,500], 20, 5, [O, R, K]);
  isles(O, [[920,455,4,8],[923,461,5,9],[931,462,4,5],[925,470,4,5],[936,475,12,8],[932,484,6,9],[943,493,8,7],[950,480,8,6],[948,496,11,10],[955,505,7,7],[961,508,5,4],[965,479,2,8]]);
  out += '<path d="M818.500 281.500 842 404" stroke="#333" stroke-width="1.200"/>';
  map.innerHTML = out;
})();
```
